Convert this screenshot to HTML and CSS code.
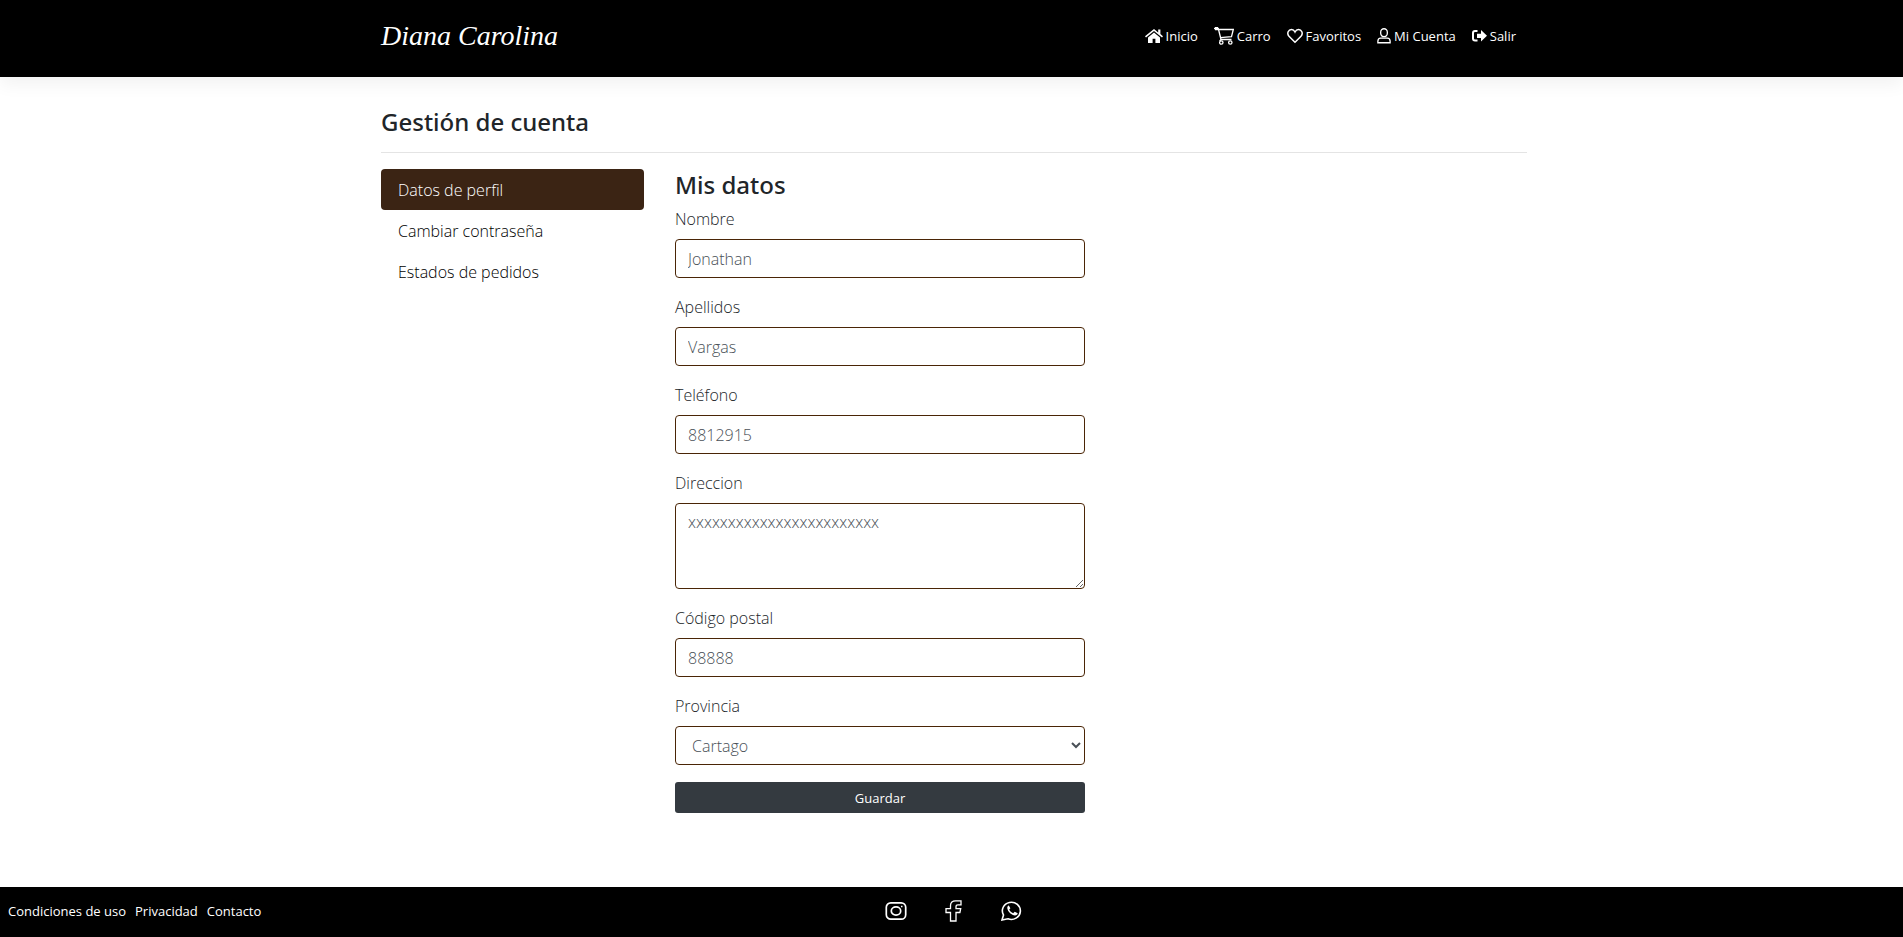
FILE: index.html
```html
<!DOCTYPE html>
<html lang="es">
<head>
<meta charset="utf-8">
<title>Gestión de cuenta - Diana Carolina</title>
<link rel="stylesheet" href="styles.css">
</head>
<body>
<header class="header">
  <div class="container header-inner">
    <a class="brand" href="#">Diana Carolina</a>
    <nav class="nav">
      <a href="#"><svg width="18" height="16" viewBox="0 0 18 16" fill="currentColor"><path d="M9 .9 0 8.2l1 1.3L9 3l8 6.500 1-1.300-2.600-2.100V1.500h-2.200v2.900z"/><path d="M9 4.500 3 9.400V15h4.600v-4.300h2.800V15H15V9.400z"/></svg>Inicio</a>
      <a href="#"><svg width="20" height="18" viewBox="0 0 20 18" fill="none" stroke="currentColor" stroke-width="1.300"><path d="M0 1.500h4.300l2.700 11h10.500M1 .7h3M1 2.500h3M4.600 2.500h14.700l-1.800 7.200-11.200 1M7 12.500 5.700 14"/><circle cx="7.300" cy="15.500" r="1.700"/><circle cx="16.300" cy="15.500" r="1.700"/></svg>Carro</a>
      <a href="#"><svg width="16" height="16" viewBox="0 0 16 16" fill="none" stroke="currentColor" stroke-width="1.500"><path d="M8 14.200 2 8.200C-.6 5.300 1.500 1.500 4.500 1.500 6.500 1.500 7.500 3 8 4c.5-1 1.500-2.500 3.500-2.500 3 0 5.100 3.800 2.500 6.700z"/></svg>Favoritos</a>
      <a href="#"><svg width="14" height="16" viewBox="0 0 16 17" preserveAspectRatio="none" fill="none" stroke="currentColor" stroke-width="1.500"><rect x="4.200" y=".8" width="7.600" height="8.400" rx="3.700"/><path d="M1 15.700v-1.500c0-2 1.400-3.400 3.300-3.400h7.400c1.900 0 3.300 1.400 3.300 3.400v1.500z"/></svg>Mi Cuenta</a>
      <a href="#"><svg width="15" height="14" viewBox="0 0 15 14" fill="none" stroke="currentColor" stroke-width="2"><path d="M5.500 2H3Q1 2 1 4v5.500q0 2 2 2h2.500"/><path d="M5 4.800h4V1l6 5.800-6 5.800V9H5z" fill="currentColor" stroke="none"/></svg>Salir</a>
    </nav>
  </div>
</header>
<main class="container main">
  <h1 class="title">Gestión de cuenta</h1>
  <div class="account">
    <nav class="menu" aria-label="Cuenta">
      <a class="menu-link active" href="#">Datos de perfil</a>
      <a class="menu-link" href="#">Cambiar contraseña</a>
      <a class="menu-link" href="#">Estados de pedidos</a>
    </nav>
    <form class="form">
      <h2 class="form-title">Mis datos</h2>
      <div class="field"><label for="nombre">Nombre</label><input class="control" id="nombre" type="text" value="Jonathan"></div>
      <div class="field"><label for="apellidos">Apellidos</label><input class="control" id="apellidos" type="text" value="Vargas"></div>
      <div class="field"><label for="telefono">Teléfono</label><input class="control" id="telefono" type="text" value="8812915"></div>
      <div class="field"><label for="direccion">Direccion</label><textarea class="control area" id="direccion">xxxxxxxxxxxxxxxxxxxxxxxx</textarea></div>
      <div class="field"><label for="postal">Código postal</label><input class="control" id="postal" type="text" value="88888"></div>
      <div class="field"><label for="provincia">Provincia</label><select class="control" id="provincia"><option>Cartago</option></select></div>
      <button class="save" type="submit">Guardar</button>
    </form>
  </div>
</main>
<footer class="footer">
  <nav class="legal"><a href="#">Condiciones de uso</a><a href="#">Privacidad</a><a href="#">Contacto</a></nav>
  <div class="social">
    <a href="#" aria-label="Instagram"><svg width="22" height="22" viewBox="0 0 22 22" fill="none" stroke="currentColor" stroke-width="1.700"><rect x="1.300" y="2.800" width="19.400" height="16.400" rx="4.500"/><ellipse cx="11" cy="11" rx="4.700" ry="4.100"/><path d="M16 6.500h1.500"/></svg></a>
    <a href="#" aria-label="Facebook"><svg width="22" height="22" viewBox="0 0 22 22" fill="none" stroke="currentColor" stroke-width="1.300"><path d="M7.500 21V12.500H3V8.700h4.500V5.500C7.500 2.500 9.500.9 12.500.9H18v4h-3c-1.500 0-2 .6-2 1.800v2h4.700l-.8 3.800H13V21z"/></svg></a>
    <a href="#" aria-label="WhatsApp"><svg width="22" height="22" viewBox="0 0 22 22" fill="none" stroke="currentColor" stroke-width="1.600"><path d="m1 20 1.500-5A9 8.600 0 1 1 7 18.800z"/><path fill="currentColor" stroke="none" d="M7.800 5.500c-1 .2-1.700 1.300-1.500 2.700.5 3.700 4.500 7 7.700 7.200 1.500 0 2.600-.9 2.700-2.200l-3-1.500-1.500 1.500c-1.900-.8-3.200-2-4-3.700l1.200-1.300z"/></svg></a>
  </div>
</footer>
</body>
</html>
```
FILE: styles.css
```css
* { box-sizing: border-box; }
body {
  margin: 0;
  min-height: 100vh;
  display: flex;
  flex-direction: column;
  font: 350 16px/24px "Segoe UI", "Open Sans", "Noto Sans", sans-serif;
  color: #212529;
  background: #fff;
}
a { color: inherit; text-decoration: none; }
svg { flex: none; display: block; }
.container { width: auto; max-width: 1146px; margin-left: round(20vw, 1px); }
.header { background: #000; color: #fff; box-shadow: 0 8px 16px rgba(0, 0, 0, .05); }
.header-inner { display: flex; justify-content: space-between; height: 77px; padding-bottom: 6px; align-items: center; }
.brand { font: italic 28px/40px "Liberation Serif", serif; }
.nav { display: flex; gap: 16px; font-size: 13px; font-weight: 400; padding-right: 11px; }
.nav a { display: flex; align-items: center; gap: 3px; }
.main { flex: 1; padding-top: 29px; }
.title, .form-title { margin: 0; font-family: "Segoe UI", "Noto Sans", sans-serif; font-size: 24px; font-weight: 500; line-height: 32px; }
.title { padding-bottom: 14px; border-bottom: 1px solid #e4e4e4; }
.account { display: grid; grid-template-columns: 263px 410px; gap: 31px; padding-top: 16px; }
.menu-link { display: block; padding: 9px 17px 8px; border-radius: 4px; color: #000; }
.menu-link.active { background: #3b2414; color: #fff; }
.form-title { margin-bottom: 6px; }
.field { margin-bottom: 17px; }
.field label { display: block; margin-bottom: 8px; }
.control {
  display: block;
  width: 100%;
  height: 39px;
  padding: 6px 12px;
  border: 1px solid #4a2506;
  border-radius: 4px;
  background: #fff;
  color: #495057;
  font: inherit;
}
.area { height: 86px; resize: vertical; }
.save {
  display: block;
  width: 100%;
  height: 31px;
  border: 0;
  border-radius: 3px;
  background: #343a40;
  color: #fff;
  font: 13px/20px "Segoe UI", "Open Sans", "Noto Sans", sans-serif;
}
.footer { display: grid; grid-template-columns: 1fr auto 1fr; align-items: center; height: 50px; padding: 0 4px 3px 8px; background: #000; color: #fff; font-size: 13px; font-weight: 400; }
.legal { display: flex; gap: 9px; }
.social { display: flex; gap: 36px; }
```
